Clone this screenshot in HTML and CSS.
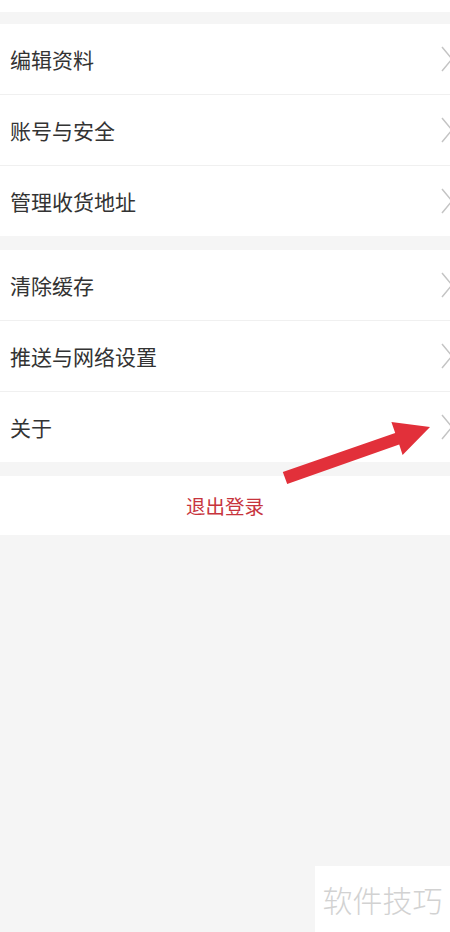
FILE: index.html
```html
<!DOCTYPE html>
<html lang="zh-CN">
<head>
    <meta charset="UTF-8">
    <meta name="viewport" content="width=device-width, initial-scale=1.0">
    <title>设置</title>
    <link rel="stylesheet" href="styles.css">
</head>
<body>
    <div class="top-bar"></div>

    <div class="group">
        <div class="item"><span>编辑资料</span><svg class="chevron" viewBox="0 0 12 26"><path d="M1 1 L11 13 L1 25"/></svg></div>
        <div class="item"><span>账号与安全</span><svg class="chevron" viewBox="0 0 12 26"><path d="M1 1 L11 13 L1 25"/></svg></div>
        <div class="item"><span>管理收货地址</span><svg class="chevron" viewBox="0 0 12 26"><path d="M1 1 L11 13 L1 25"/></svg></div>
    </div>

    <div class="group">
        <div class="item"><span>清除缓存</span><svg class="chevron" viewBox="0 0 12 26"><path d="M1 1 L11 13 L1 25"/></svg></div>
        <div class="item"><span>推送与网络设置</span><svg class="chevron" viewBox="0 0 12 26"><path d="M1 1 L11 13 L1 25"/></svg></div>
        <div class="item"><span>关于</span><svg class="chevron" viewBox="0 0 12 26"><path d="M1 1 L11 13 L1 25"/></svg></div>
    </div>

    <div class="logout">退出登录</div>

    <!-- red pointer drawn over the list -->
    <svg class="pointer" width="450" height="932" viewBox="0 0 450 932">
        <polygon points="282.8,472 395.2,433 391.4,422 430,427 402.6,455 399.2,444.6 287.2,484"/>
    </svg>

    <div class="watermark">软件技巧</div>
</body>
</html>
```

FILE: styles.css
```css
body {
    margin: 0;
    background-color: #f5f5f5;
    font-family: "Noto Sans CJK SC", "Noto Sans", sans-serif;
    color: #333;
    min-height: 932px;
    position: relative;
}

.top-bar {
    height: 12px;
    background-color: #fff;
    margin-bottom: 12px;
}

.group {
    background-color: #fff;
    margin-bottom: 14px;
}

.item {
    height: 70px;
    display: flex;
    align-items: center;
    justify-content: space-between;
    padding-left: 10px;
    font-size: 21px;
    border-bottom: 1px solid #f0f0f0;
    overflow: hidden;
}

.item:last-child {
    border-bottom: none;
}

.chevron {
    width: 12px;
    height: 26px;
    margin-right: -3px;
    flex-shrink: 0;
}

.chevron path {
    fill: none;
    stroke: #c4c4c4;
    stroke-width: 1.5;
}

.logout {
    height: 59px;
    background-color: #fff;
    display: flex;
    align-items: center;
    justify-content: center;
    color: #c7343d;
    font-size: 19.5px;
}

.pointer {
    position: absolute;
    top: 0;
    left: 0;
    pointer-events: none;
}

.pointer polygon {
    fill: #e2303a;
}

.watermark {
    position: absolute;
    right: 0;
    bottom: 0;
    width: 135px;
    height: 66px;
    background-color: #fff;
    color: #d2d2d2;
    font-size: 30px;
    font-weight: 300;
    display: flex;
    align-items: center;
    justify-content: center;
}
```
